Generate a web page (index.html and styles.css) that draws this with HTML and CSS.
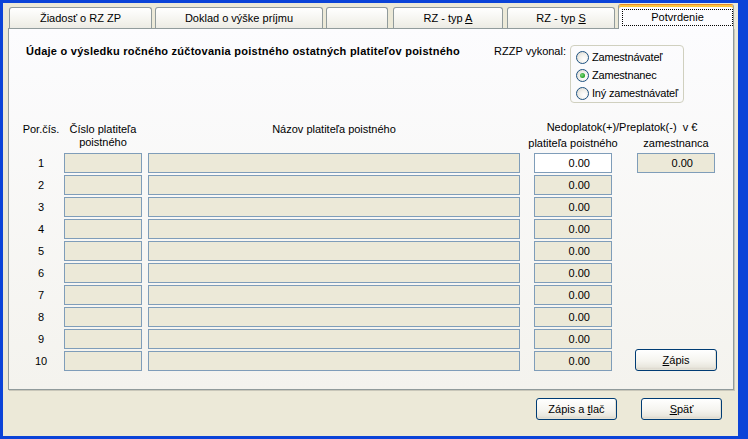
FILE: index.html
```html
<!DOCTYPE html>
<html lang="sk">
<head>
<meta charset="utf-8">
<title>Potvrdenie</title>
<link rel="stylesheet" href="styles.css">
</head>
<body>
<div class="window">
  <div class="tabs">
    <div class="tab t1"><span>Žiadosť o RZ ZP</span></div>
    <div class="tab t2"><span>Doklad o výške príjmu</span></div>
    <div class="tab t3"></div>
    <div class="tab t4"><span>RZ - typ <u>A</u></span></div>
    <div class="tab t5"><span>RZ - typ <u>S</u></span></div>
    <div class="tab active t6"><span class="focus">Potvrdenie</span></div>
  </div>
  <div class="panel">
    <div class="head">
      <div class="title">Údaje o výsledku ročného zúčtovania poistného ostatných platiteľov poistného</div>
      <div class="vyk">RZZP vykonal:</div>
      <div class="radios">
        <div class="radio"><span class="circle"></span><span>Zamestnávateľ</span></div>
        <div class="radio"><span class="circle checked"><span class="dot"></span></span><span>Zamestnanec</span></div>
        <div class="radio"><span class="circle"></span><span>Iný zamestnávateľ</span></div>
      </div>
    </div>
    <div class="grid">
      <div class="h por">Por.čís.</div>
      <div class="h cis">Číslo platiteľa<br>poistného</div>
      <div class="h naz">Názov platiteľa poistného</div>
      <div class="h ned">
        <div class="ned-top">Nedoplatok(+)/Preplatok(-)&nbsp; v €</div>
        <div class="sub"><span class="sub-a">platiteľa poistného</span><span class="sub-b">zamestnanca</span></div>
      </div>

      <div class="num">1</div><div class="box c2"></div><div class="box c3"></div><div class="box c4 amt white">0.00</div><div class="box c5 amt">0.00</div>
      <div class="num">2</div><div class="box c2"></div><div class="box c3"></div><div class="box c4 amt">0.00</div><div class="empty"></div>
      <div class="num">3</div><div class="box c2"></div><div class="box c3"></div><div class="box c4 amt">0.00</div><div class="empty"></div>
      <div class="num">4</div><div class="box c2"></div><div class="box c3"></div><div class="box c4 amt">0.00</div><div class="empty"></div>
      <div class="num">5</div><div class="box c2"></div><div class="box c3"></div><div class="box c4 amt">0.00</div><div class="empty"></div>
      <div class="num">6</div><div class="box c2"></div><div class="box c3"></div><div class="box c4 amt">0.00</div><div class="empty"></div>
      <div class="num">7</div><div class="box c2"></div><div class="box c3"></div><div class="box c4 amt">0.00</div><div class="empty"></div>
      <div class="num">8</div><div class="box c2"></div><div class="box c3"></div><div class="box c4 amt">0.00</div><div class="empty"></div>
      <div class="num">9</div><div class="box c2"></div><div class="box c3"></div><div class="box c4 amt">0.00</div><div class="empty"></div>
      <div class="num">10</div><div class="box c2"></div><div class="box c3"></div><div class="box c4 amt">0.00</div><button class="btn zapis"><u>Z</u>ápis</button>
    </div>
  </div>
  <div class="footer">
    <button class="btn">Zápis a <u>t</u>lač</button>
    <button class="btn"><u>S</u>päť</button>
  </div>
</div>
</body>
</html>
```

FILE: styles.css
```css
* { box-sizing: border-box; }
html, body { margin: 0; padding: 0; }
body {
  font-family: "Liberation Sans", Arial, sans-serif;
  font-size: 11px;
  color: #000;
  background: #ECE9D8;
}
u { text-decoration: underline; text-underline-offset: 1px; }

.window {
  width: 748px;
  height: 439px;
  background: #ECE9D8;
  border-style: solid;
  border-color: #0B43D8;
  border-width: 3px 10px 3px 3px;
  display: flex;
  flex-direction: column;
}

/* tabs */
.tabs {
  display: flex;
  align-items: flex-end;
  height: 25px;
  padding: 1px 0 0 6px;
}
.tab {
  height: 21px;
  border: 1px solid #919B9C;
  border-bottom: none;
  border-radius: 3px 3px 0 0;
  background: linear-gradient(#FFFFFF, #F3F2EC 70%, #ECEBE4);
  display: flex;
  align-items: center;
  justify-content: center;
  white-space: nowrap;
  padding-bottom: 1px;
}
.t1 { width: 143px; margin-right: 3px; }
.t2 { width: 168px; margin-right: 3px; }
.t3 { width: 62px; margin-right: 5px; }
.t4 { width: 110px; margin-right: 4px; }
.t5 { width: 108px; margin-right: 3px; }
.t6 { width: 116px; }
.tab.active {
  height: 25px;
  margin-bottom: -1px;
  position: relative;
  z-index: 1;
  background: #FCFCFE;
  border-top: 1px solid #E68B2C;
  box-shadow: inset 0 2px 0 #FFC73C;
  align-items: flex-start;
  justify-content: stretch;
  padding: 4px 0 0 3px;
}
.focus {
  display: block;
  flex: 1;
  height: 17px;
  line-height: 14px;
  border: 1px dotted #000;
  text-align: center;
}

/* panel */
.panel {
  width: 726px;
  height: 362px;
  margin-left: 5px;
  border: 1px solid #919B9C;
  box-shadow: 1px 1px 0 #C9C7BA;
  background: linear-gradient(#FCFCFE, #F4F3EE);
  padding: 16px 0 0 13px;
}
.head {
  display: flex;
  align-items: flex-start;
  padding-right: 49px;
}
.title {
  flex: 1;
  margin-left: 4px;
  font-weight: bold;
  line-height: 13px;
  letter-spacing: 0.25px;
  white-space: nowrap;
}
.vyk {
  line-height: 13px;
  margin-right: 4px;
  white-space: nowrap;
}
.radios {
  width: 114px;
  border: 1px solid #D0D0BF;
  border-radius: 4px;
  padding: 2px 0 0 5px;
  letter-spacing: -0.2px;
}
.radio {
  height: 18px;
  display: flex;
  align-items: center;
  white-space: nowrap;
}
.circle {
  width: 13px;
  height: 13px;
  border-radius: 50%;
  border: 1px solid #1C5180;
  background: radial-gradient(circle at 65% 65%, #FFFFFF 0%, #F2F1EC 45%, #D5D3CB 100%);
  margin-right: 3px;
  display: flex;
  align-items: center;
  justify-content: center;
  flex: none;
}
.dot {
  width: 5px;
  height: 5px;
  border-radius: 50%;
  background: radial-gradient(circle at 40% 40%, #7FD77F, #21A121 70%);
}

/* grid */
.grid {
  margin-top: 18px;
  display: grid;
  grid-template-columns: 42px 84px 386px 103px 80px;
  grid-template-rows: 30px;
  grid-auto-rows: 20px;
  row-gap: 2px;
}
.h { line-height: 13px; white-space: nowrap; }
.por { width: 38px; text-align: center; margin-top: 2px; }
.cis { width: 78px; text-align: center; margin-top: 2px; display: flex; flex-direction: column; align-items: center; }
.naz { width: 372px; text-align: center; margin-top: 2px; }
.ned { grid-column: 4 / span 2; }
.ned-top { width: 176px; display: flex; justify-content: center; }
.sub { display: flex; margin-top: 3px; }
.sub-a { width: 78px; display: flex; justify-content: center; margin-right: 25px; }
.sub-b { width: 78px; display: flex; justify-content: center; }

.num { width: 38px; text-align: center; line-height: 20px; }
.box {
  height: 20px;
  border: 1px solid #7F9DB9;
  background: #ECE9D8;
}
.c2 { width: 78px; }
.c3 { width: 372px; }
.c4 { width: 78px; }
.c5 { width: 78px; }
.amt { text-align: right; padding-right: 21px; line-height: 18px; }
.white { background: #FFFFFF; }

.btn {
  font-family: "Liberation Sans", Arial, sans-serif;
  font-size: 11px;
  color: #000;
  height: 22px;
  width: 82px;
  padding: 0;
  border: 1px solid #003C74;
  border-radius: 3px;
  background: linear-gradient(#FFFFFF, #F5F4EF 55%, #E9E7DE 85%, #D6D0C5);
  box-shadow: inset -1px -1px 0 #E3E1D6;
}
.zapis {
  align-self: end;
  margin-left: -2px;
}

.footer {
  display: flex;
  justify-content: flex-end;
  gap: 24px;
  margin-top: 8px;
  padding-right: 16px;
}
.footer .btn { width: 81px; }
```
